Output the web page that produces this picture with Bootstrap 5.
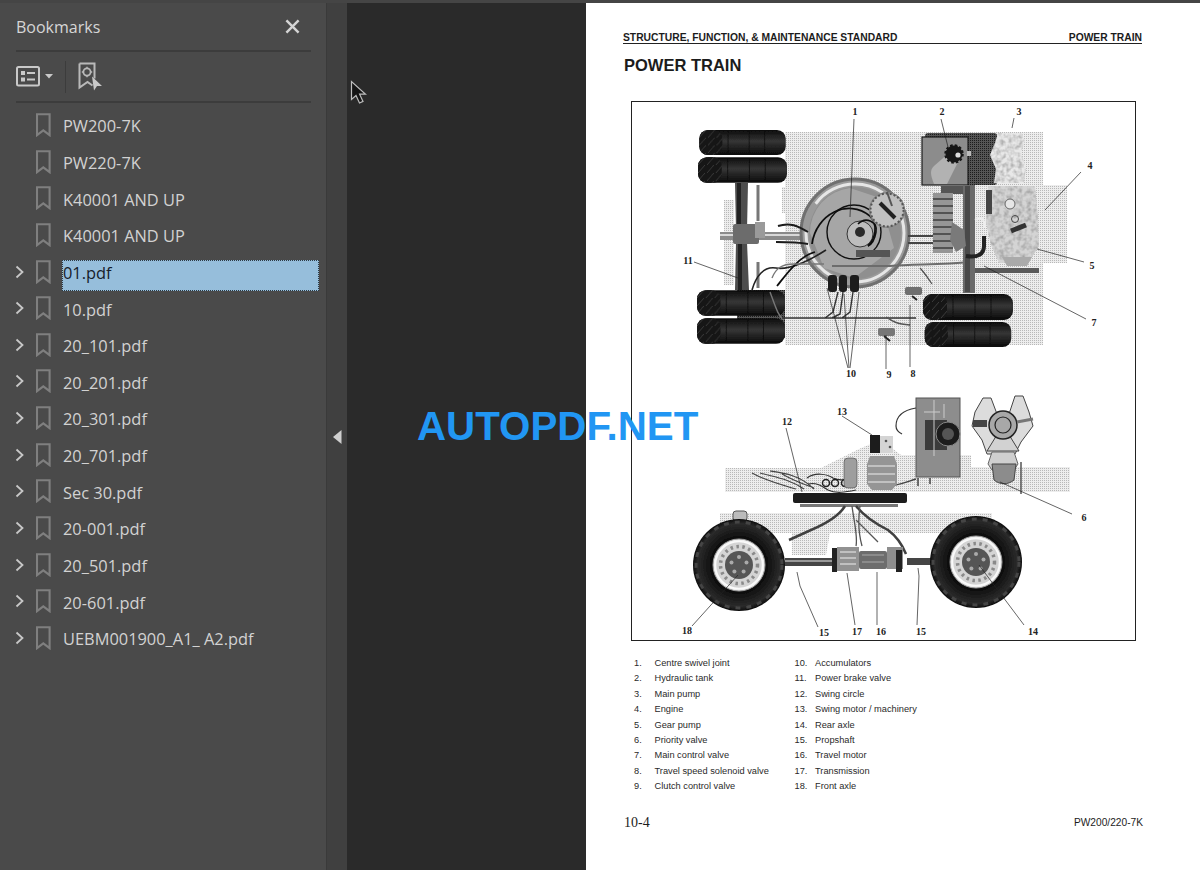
<!DOCTYPE html>
<html lang="en">
<head>
    <meta charset="UTF-8">
    <title>Bookmarks - PW200/220-7K</title>
    <link href="https://cdn.jsdelivr.net/npm/bootstrap@5.3.0/dist/css/bootstrap.min.css" rel="stylesheet">
    <style>
        html, body { height: 870px; overflow: hidden; }
        body { background: #2a2a2a; position: relative; font-family: "Liberation Sans", Arial, sans-serif; }
        .top-strip { height: 3px; background: #454545; }
        .viewer { height: 867px; }
        .side-panel { width: 326px; background: #4a4a4a; color: #d6d6d6; padding: 0 15px 0 16px; font-family: "Open Sans", "Noto Sans", sans-serif; }
        .panel-head { height: 49px; border-bottom: 2px solid #3c3c3c; }
        .panel-title { font-size: 16px; }
        .panel-close { margin-right: 11px; }
        .panel-tools { height: 51px; border-bottom: 2px solid #3c3c3c; }
        .tool-sep { width: 1px; height: 32px; background: #3c3c3c; margin: 0 12px 0 12px; }
        .mark-list { padding-top: 3.8px; margin-left: -16px; margin-right: -8px; }
        .mark-row { height: 36.64px; }
        .mark-arrow { width: 36px; padding-left: 15px; }
        .mark-flag { width: 26px; }
        .mark-label { font-size: 16.4px; padding: 0 1px; line-height: 25px; height: 31px; margin-top: 6.7px; align-self: flex-start; flex: 1; color: #d2d2d2; }
        .mark-on { background: #96bedb; color: #16212b; outline: 1px dotted #2c3a45; outline-offset: -1px; }
        .side-gutter { width: 21px; background: #404040; border-left: 1px solid #3a3a3a; }
        .doc-canvas { width: 239px; background: #2a2a2a; }
        .doc-page { width: 614px; background: #fff; padding: 28px 58px 0 37px; color: #1c1c1c; }
        .doc-head { font-size: 10.3px; font-weight: 700; height: 13px; line-height: 13px; border-bottom: 1px solid #222; }
        .doc-title { font-size: 16.5px; font-weight: 700; margin: 12px 0 0 1px; line-height: 18px; height: 18px; }
        .doc-figure { width: 505px; height: 540px; margin: 27px 0 0 8px; border: 1px solid #222; }
        .doc-figure svg { display: block; }
        .part-list { margin: 15px 0 0 11px; font-size: 9.25px; color: #2a2a2a; line-height: 15.4px; }
        .part-col { width: 160.5px; }
        .part-no { width: 20.5px; }
        .doc-foot { margin-top: 18px; height: 20px; margin-right: -1px; }
        .foot-page { font-family: "Liberation Serif", serif; font-size: 14px; margin-left: 1px; }
        .foot-code { font-size: 10.2px; }
        .stamp { position: absolute; left: 417px; top: 404px; font-size: 40.3px; line-height: 46px; color: #2196f3; font-weight: 700; font-family: "Liberation Sans", sans-serif; white-space: nowrap; }
        .pointer { position: absolute; left: 350px; top: 80px; }
        .fig-label { font-family: "Liberation Serif", serif; font-size: 10px; font-weight: 700; fill: #222; text-anchor: middle; }
    </style>
</head>
<body>
    <svg width="0" height="0" class="position-absolute">
        <symbol id="flag" viewBox="0 0 16 24"><path d="M1 1.2h12.6v21l-6.3-4.8-6.3 4.8z" fill="none" stroke="#7f7f7f" stroke-width="2.1"/></symbol>
        <symbol id="chev" viewBox="0 0 10 14"><path d="M1.5 1.5l6 5.5-6 5.5" fill="none" stroke="#c8c8c8" stroke-width="1.8"/></symbol>
    </svg>

    <div class="top-strip"></div>
    <div class="viewer d-flex">
        <div class="side-panel flex-shrink-0">
            <div class="panel-head d-flex align-items-center justify-content-between">
                <span class="panel-title">Bookmarks</span>
                <svg width="15" height="15" viewBox="0 0 16 16" class="panel-close"><path d="M1.5 1.5l13 13M14.5 1.5l-13 13" stroke="#d4d4d4" stroke-width="2.6"/></svg>
            </div>
            <div class="panel-tools d-flex align-items-center">
                <svg width="25" height="21" viewBox="0 0 25 21" class="ms-0"><rect x="1" y="1" width="22" height="18.5" rx="1.5" fill="none" stroke="#c9c9c9" stroke-width="2"/><rect x="5" y="5" width="4" height="4" fill="#c9c9c9"/><rect x="5" y="11.5" width="4" height="4" fill="#c9c9c9"/><path d="M11 7h8M11 13.5h8" stroke="#c9c9c9" stroke-width="2"/></svg>
                <svg width="8" height="5" viewBox="0 0 8 5" class="ms-1"><path d="M0 0h8L4 4.5z" fill="#c9c9c9"/></svg>
                <span class="tool-sep"></span>
                <svg width="25" height="29" viewBox="0 0 25 29"><path d="M1.5 1.5h15v15M1.5 1.5v24l8-5.5 5 3.5" fill="none" stroke="#b9b9b9" stroke-width="2"/><circle cx="9" cy="10" r="3.6" fill="none" stroke="#b9b9b9" stroke-width="1.8"/><path d="M9 4.8v1.6M9 13.6v1.6M3.8 10h1.6M12.6 10h1.6" stroke="#b9b9b9" stroke-width="1.4"/><path d="M14 14.5l10 9.5h-5l-3 4.5z" fill="#c9c9c9"/></svg>
            </div>
            <div class="mark-list d-flex flex-column">
                <div class="mark-row d-flex align-items-center"><span class="mark-arrow"></span><span class="mark-flag d-flex"><svg width="16" height="24"><use href="#flag"/></svg></span><span class="mark-label">PW200-7K</span></div>
                <div class="mark-row d-flex align-items-center"><span class="mark-arrow"></span><span class="mark-flag d-flex"><svg width="16" height="24"><use href="#flag"/></svg></span><span class="mark-label">PW220-7K</span></div>
                <div class="mark-row d-flex align-items-center"><span class="mark-arrow"></span><span class="mark-flag d-flex"><svg width="16" height="24"><use href="#flag"/></svg></span><span class="mark-label">K40001 AND UP</span></div>
                <div class="mark-row d-flex align-items-center"><span class="mark-arrow"></span><span class="mark-flag d-flex"><svg width="16" height="24"><use href="#flag"/></svg></span><span class="mark-label">K40001 AND UP</span></div>
                <div class="mark-row d-flex align-items-center"><span class="mark-arrow d-flex"><svg width="10" height="14"><use href="#chev"/></svg></span><span class="mark-flag d-flex"><svg width="16" height="24"><use href="#flag"/></svg></span><span class="mark-label mark-on">01.pdf</span></div>
                <div class="mark-row d-flex align-items-center"><span class="mark-arrow d-flex"><svg width="10" height="14"><use href="#chev"/></svg></span><span class="mark-flag d-flex"><svg width="16" height="24"><use href="#flag"/></svg></span><span class="mark-label">10.pdf</span></div>
                <div class="mark-row d-flex align-items-center"><span class="mark-arrow d-flex"><svg width="10" height="14"><use href="#chev"/></svg></span><span class="mark-flag d-flex"><svg width="16" height="24"><use href="#flag"/></svg></span><span class="mark-label">20_101.pdf</span></div>
                <div class="mark-row d-flex align-items-center"><span class="mark-arrow d-flex"><svg width="10" height="14"><use href="#chev"/></svg></span><span class="mark-flag d-flex"><svg width="16" height="24"><use href="#flag"/></svg></span><span class="mark-label">20_201.pdf</span></div>
                <div class="mark-row d-flex align-items-center"><span class="mark-arrow d-flex"><svg width="10" height="14"><use href="#chev"/></svg></span><span class="mark-flag d-flex"><svg width="16" height="24"><use href="#flag"/></svg></span><span class="mark-label">20_301.pdf</span></div>
                <div class="mark-row d-flex align-items-center"><span class="mark-arrow d-flex"><svg width="10" height="14"><use href="#chev"/></svg></span><span class="mark-flag d-flex"><svg width="16" height="24"><use href="#flag"/></svg></span><span class="mark-label">20_701.pdf</span></div>
                <div class="mark-row d-flex align-items-center"><span class="mark-arrow d-flex"><svg width="10" height="14"><use href="#chev"/></svg></span><span class="mark-flag d-flex"><svg width="16" height="24"><use href="#flag"/></svg></span><span class="mark-label">Sec 30.pdf</span></div>
                <div class="mark-row d-flex align-items-center"><span class="mark-arrow d-flex"><svg width="10" height="14"><use href="#chev"/></svg></span><span class="mark-flag d-flex"><svg width="16" height="24"><use href="#flag"/></svg></span><span class="mark-label">20-001.pdf</span></div>
                <div class="mark-row d-flex align-items-center"><span class="mark-arrow d-flex"><svg width="10" height="14"><use href="#chev"/></svg></span><span class="mark-flag d-flex"><svg width="16" height="24"><use href="#flag"/></svg></span><span class="mark-label">20_501.pdf</span></div>
                <div class="mark-row d-flex align-items-center"><span class="mark-arrow d-flex"><svg width="10" height="14"><use href="#chev"/></svg></span><span class="mark-flag d-flex"><svg width="16" height="24"><use href="#flag"/></svg></span><span class="mark-label">20-601.pdf</span></div>
                <div class="mark-row d-flex align-items-center"><span class="mark-arrow d-flex"><svg width="10" height="14"><use href="#chev"/></svg></span><span class="mark-flag d-flex"><svg width="16" height="24"><use href="#flag"/></svg></span><span class="mark-label">UEBM001900_A1_ A2.pdf</span></div>
            </div>
        </div>
        <div class="side-gutter flex-shrink-0 d-flex align-items-center justify-content-center">
            <svg width="9" height="14" viewBox="0 0 9 14"><path d="M8.5 0v14L0 7z" fill="#cfcfcf"/></svg>
        </div>
        <div class="doc-canvas flex-shrink-0"></div>
        <div class="doc-page flex-shrink-0">
            <div class="doc-head d-flex justify-content-between"><span>STRUCTURE, FUNCTION, &amp; MAINTENANCE STANDARD</span><span>POWER TRAIN</span></div>
            <div class="doc-title">POWER TRAIN</div>
            <div class="doc-figure">
                <svg width="503" height="538" viewBox="632 102 503 538" xmlns="http://www.w3.org/2000/svg">
                    <defs>
                        <pattern id="dots" width="2" height="2" patternUnits="userSpaceOnUse"><rect width="2" height="2" fill="#ededed"/><rect width="1" height="1" fill="#b8b8b8"/></pattern>
                        <pattern id="dotsDark" width="2" height="2" patternUnits="userSpaceOnUse"><rect width="2" height="2" fill="#555"/><rect width="1" height="1" fill="#1c1c1c"/></pattern>
                        <pattern id="tread" width="9" height="8" patternUnits="userSpaceOnUse"><rect width="9" height="8" fill="#141414"/><path d="M0 8L7 0" stroke="#3d3d3d" stroke-width="1"/></pattern>
                        <linearGradient id="tireShade" x1="0" y1="0" x2="0" y2="1"><stop offset="0" stop-color="#0c0c0c"/><stop offset=".45" stop-color="#363636"/><stop offset="1" stop-color="#090909"/></linearGradient>
                        <radialGradient id="tireRound"><stop offset=".6" stop-color="#0e0e0e"/><stop offset=".9" stop-color="#2b2b2b"/><stop offset="1" stop-color="#0c0c0c"/></radialGradient>
                        <symbol id="tireTop" viewBox="0 0 90 26" overflow="visible">
                            <rect width="90" height="26" rx="9" fill="url(#tireShade)"/>
                            <rect width="24" height="26" rx="9" fill="url(#tread)"/>
                            <path d="M30 1v24M52 1v24M68 1v24" stroke="#0a0a0a" stroke-width=".7"/>
                        </symbol>
                        <symbol id="wheel" viewBox="-47 -47 94 94" overflow="visible">
                            <circle r="46" fill="url(#tireRound)"/>
                            <circle r="43" fill="none" stroke="#444" stroke-width="3" stroke-dasharray="5 6"/>
                            <circle r="28" fill="#111"/>
                            <circle r="26" fill="#f0f0f0" stroke="#999"/>
                            <circle r="23.5" fill="#d4d4d4" stroke="#fafafa" stroke-width="1.5"/>
                            <circle r="18.5" fill="none" stroke="#8a8a8a" stroke-width="3.5" stroke-dasharray="2.5 3.5"/>
                            <circle r="14" fill="#555"/>
                            <circle cx="0" cy="-8" r="2" fill="#aaa"/><circle cx="7.5" cy="-2.5" r="2" fill="#aaa"/><circle cx="4.6" cy="6.5" r="2" fill="#aaa"/><circle cx="-4.6" cy="6.5" r="2" fill="#aaa"/><circle cx="-7.5" cy="-2.5" r="2" fill="#aaa"/>
                        </symbol>
                        <filter id="soft"><feGaussianBlur stdDeviation=".45"/></filter>
                        <filter id="mottle" x="0" y="0" width="100%" height="100%">
                            <feTurbulence type="fractalNoise" baseFrequency=".22" numOctaves="2" seed="4"/>
                            <feColorMatrix values="0 0 0 0 .3  0 0 0 0 .3  0 0 0 0 .3  1.7 0 0 0 -.62"/>
                            <feComposite in2="SourceGraphic" operator="in"/>
                            <feMerge><feMergeNode in="SourceGraphic"/><feMergeNode/></feMerge>
                        </filter>
                    </defs>

                    <g filter="url(#soft)">
                        <!-- plan view -->
                        <rect x="785" y="132" width="258" height="213" fill="url(#dots)"/>
                        <rect x="1043" y="185" width="24" height="78" fill="url(#dots)"/>
                        <rect x="782" y="187" width="40" height="26" fill="url(#dots)"/>
                        <rect x="724" y="200" width="10" height="85" fill="url(#dots)"/>
                        <rect x="737" y="290" width="48" height="48" fill="url(#dotsDark)"/>

                        <use href="#tireTop" x="698" y="130" width="89" height="25"/>
                        <use href="#tireTop" x="698" y="157" width="89" height="26"/>
                        <use href="#tireTop" x="697" y="290" width="88" height="26"/>
                        <use href="#tireTop" x="697" y="318" width="88" height="26"/>
                        <use href="#tireTop" x="923" y="294" width="90" height="26"/>
                        <use href="#tireTop" x="923" y="322" width="90" height="25"/>

                        <!-- left axle -->
                        <path d="M735 183h13l-1 47h-11zM736 242h11l2 48h-14z" fill="#4e4e4e"/>
                        <path d="M737 183h4v47h-4zM738 244h4v46h-4z" fill="#222"/>
                        <rect x="720" y="232" width="80" height="8" fill="#8a8a8a"/>
                        <rect x="720" y="234" width="80" height="2" fill="#d8d8d8"/>
                        <rect x="733" y="224" width="26" height="20" rx="2" fill="#6c6c6c"/>
                        <rect x="755" y="222" width="10" height="16" fill="#9a9a9a"/>
                        <path d="M758 185v36M758 262v26" stroke="#777" stroke-width="3"/>

                        <!-- swing circle -->
                        <circle cx="855" cy="233" r="54" fill="#9a9a9a" stroke="#6f6f6f" stroke-width="3"/>
                        <circle cx="855" cy="233" r="49" fill="none" stroke="#e6e6e6" stroke-width="3" stroke-dasharray="75 20 60 30"/>
                        <circle cx="855" cy="233" r="46" fill="#8f8f8f"/>
                        <path d="M810 233a45 45 0 0 1 40-45l30 10 14 50-40 30-30-10z" fill="#a6a6a6"/>
                        <circle cx="860" cy="234" r="13" fill="#bdbdbd" stroke="#333"/>
                        <circle cx="860" cy="232" r="5" fill="#2a2a2a"/>
                        <circle cx="854" cy="232" r="27" fill="none" stroke="#111" stroke-width="1.4"/>
                        <path d="M812 244c4-30 36-46 58-28 8 8 6 22-2 30" fill="none" stroke="#111" stroke-width="1.8"/>
                        <path d="M858 224c8-8 20-2 18 8-1 6-4 12-8 14" fill="none" stroke="#111" stroke-width="1.6"/>
                        <circle cx="887" cy="210" r="18" fill="#8a8a8a"/>
                        <circle cx="887" cy="210" r="16.5" fill="#c0c0c0" stroke="#555" stroke-width="2" stroke-dasharray="2 2"/>
                        <path d="M880 203l15 15" stroke="#222" stroke-width="4"/>
                        <path d="M887 192l5 14" stroke="#555" stroke-width="2"/>
                        <rect x="856" y="250" width="34" height="7" fill="#555"/>
                        <path d="M778 226c12-4 20 0 30 6M776 242c12 0 22 0 32 2" fill="none" stroke="#1a1a1a" stroke-width="2"/>
                        <path d="M908 236h25M908 243h25" stroke="#444" stroke-width="2"/>

                        <!-- accumulators -->
                        <rect x="828" y="275" width="9" height="17" rx="3" fill="#1d1d1d"/>
                        <rect x="839" y="275" width="8" height="17" rx="3" fill="#1d1d1d"/>
                        <rect x="850" y="275" width="9" height="17" rx="3" fill="#1d1d1d"/>

                        <!-- hose runs -->
                        <path d="M752 290c4-14 12-24 24-22s28-4 50-18" fill="none" stroke="#222" stroke-width="1.6"/>
                        <path d="M777 286c8-10 22-30 38-34" fill="none" stroke="#111" stroke-width="1.8"/>
                        <path d="M772 278c4-10 10-14 22-14h30M770 292c6 16 8 24 14 28" fill="none" stroke="#777" stroke-width="1.4"/>
                        <path d="M782 318h134M838 292l-5 20-8 6M843 292l-3 22-8 4M853 292l-3 20-8 6" fill="none" stroke="#333" stroke-width="1.4"/>
                        <path d="M886 317c6 4 10 7 24 8" fill="none" stroke="#555" stroke-width="1.4"/>
                        <path d="M832 266h58c24-2 50-1 80-4" fill="none" stroke="#6c6c6c" stroke-width="2"/>
                        <path d="M920 268c4 4 8 10 12 16" stroke="#555" stroke-width="1.2"/>
                        <rect x="975" y="268" width="64" height="5" fill="#5a5a5a"/>
                        <rect x="905" y="287" width="17" height="8" rx="2" fill="#6e6e6e"/>
                        <rect x="878" y="328" width="17" height="8" rx="2" fill="#777"/>
                        <path d="M912 296l5 4M884 336l6 5" stroke="#222" stroke-width="2"/>

                        <!-- hydraulic tank -->
                        <rect x="925" y="133" width="72" height="52" rx="3" fill="url(#dotsDark)"/>
                        <rect x="922" y="137" width="46" height="48" fill="#8c8c8c" stroke="#1c1c1c" stroke-width="1.2"/>
                        <path d="M934 184c-4-10-4-14 0-18l16-14 9 8-12 24z" fill="#b2b2b2"/>
                        <circle cx="954" cy="154" r="8.5" fill="#141414" stroke="#141414" stroke-width="2.5" stroke-dasharray="2.5 2"/>
                        <circle cx="958" cy="155" r="2.6" fill="#dcdcdc"/>
                        <rect x="967" y="151" width="4" height="5" fill="#bbb"/>

                        <!-- control valve and right axle -->
                        <rect x="963" y="185" width="12" height="108" fill="#6b6b6b"/>
                        <rect x="965" y="186" width="5" height="106" fill="#4a4a4a"/>
                        <rect x="941" y="186" width="22" height="8" fill="#555"/>
                        <rect x="933" y="193" width="20" height="60" fill="#969696"/>
                        <path d="M933 199h20M933 206h20M933 213h20M933 220h20M933 227h20M933 234h20M933 241h20M933 248h20" stroke="#3c3c3c" stroke-width="1.6"/>
                        <path d="M952 222l12 8 2 16-10 6-6-12z" fill="#7a7a7a"/>
                        <path d="M966 256c12 2 18-2 18-10v-10" fill="none" stroke="#222" stroke-width="4"/>
                        <path d="M975 220c8-4 10 0 9 8" fill="none" stroke="#eee" stroke-width="2"/>

                        <!-- engine -->
                        <path d="M998 133h24l3 8-4 12 5 14-2 16h-30l2-14-6-14 5-12z" fill="#e8e8e8" filter="url(#mottle)"/>
                        <path d="M988 186h47l3 30 1 30-10 16-30 1-8-18-5-22z" fill="#d4d4d4" filter="url(#mottle)"/>
                        <rect x="986" y="190" width="6" height="24" fill="#444"/>
                        <circle cx="1015" cy="219" r="3.5" fill="none" stroke="#444"/><circle cx="1010" cy="204" r="5" fill="#e6e6e6" stroke="#666"/>
                        <path d="M1011 231l15-6" stroke="#333" stroke-width="5"/>
                        <path d="M1002 257h30l-5 9h-20z" fill="#aaa"/>

                        <!-- side view -->
                        <path d="M725 468h96l18-9 20-10 14-6h12l16 12h70v12h99v25H725z" fill="url(#dots)"/>
                        <path d="M720 513h272v20H830l-4 22h-34v-22h-72z" fill="url(#dots)"/>
                        <path d="M752 473c14 8 30 12 44 16M760 473c14 4 30 6 44 16M770 471c14 2 30 4 44 18M782 474c14 8 22 10 32 14" fill="none" stroke="#444" stroke-width="1.1"/>
                        <path d="M807 478c8-6 20-4 26 0 6 3 12 2 22 0M808 484c8-2 14 2 20 6 8 4 18 2 28 0" fill="none" stroke="#333" stroke-width="1.2"/>
                        <circle cx="826" cy="483" r="3.5" fill="none" stroke="#222" stroke-width="1.5"/>
                        <circle cx="835" cy="483" r="3.5" fill="none" stroke="#222" stroke-width="1.5"/>
                        <circle cx="845" cy="483" r="3.5" fill="none" stroke="#222" stroke-width="1.5"/>
                        <rect x="793" y="493" width="114" height="10" rx="2" fill="#1b1b1b"/>
                        <rect x="800" y="504" width="98" height="3" fill="#777"/>
                        <path d="M876 488c20-1 30-6 40-9M918 478v8M930 478v6" fill="none" stroke="#444" stroke-width="1.5"/>
                        <rect x="844" y="458" width="13" height="30" rx="4" fill="#9e9e9e" stroke="#444" stroke-width=".6"/>
                        <path d="M870 456h24l3 8v20l-5 6h-20l-5-6v-20z" fill="#959595"/>
                        <path d="M868 466h27M868 474h27M868 482h27" stroke="#cfcfcf" stroke-width="1.6"/>
                        <rect x="870" y="435" width="10" height="18" fill="#1a1a1a"/>
                        <rect x="880" y="436" width="13" height="17" fill="#d4d4d4"/>
                        <circle cx="886" cy="441" r="1.3" fill="#555"/><circle cx="890" cy="447" r="1.3" fill="#555"/>
                        <rect x="916" y="398" width="44" height="79" fill="#8d8d8d" stroke="#555"/>
                        <rect x="925" y="420" width="22" height="30" fill="#3a3a3a"/>
                        <circle cx="948" cy="434" r="12" fill="#1d1d1d" stroke="#888"/>
                        <circle cx="948" cy="434" r="6" fill="#555"/>
                        <path d="M934 400v56M924 412h16M944 404v14" stroke="#ccc" stroke-width="1"/>
                        <path d="M916 408c-12 2-20 8-20 18 0 4 2 6 6 8" fill="none" stroke="#333" stroke-width="1.2"/>
                        <path d="M975 412l8-14 8 0 6 16 12 0 6-18 8 0 6 16 4 14-12 16-6 12h-28l-5-14-10-14z" fill="#dcdcdc" stroke="#444"/>
                        <rect x="973" y="420" width="14" height="7" fill="#444"/>
                        <path d="M1003 425l-16 26h32z" fill="#d2d2d2" stroke="#444"/>
                        <circle cx="1003" cy="425" r="14" fill="#a8a8a8" stroke="#222" stroke-width="1.5"/>
                        <circle cx="1003" cy="425" r="8" fill="none" stroke="#222" stroke-width="1.2"/>
                        <path d="M1017 422l16-3" stroke="#777" stroke-width="3"/>
                        <path d="M992 452h22l4 12-4 6h-22l-4-6z" fill="#cfcfcf" stroke="#666"/>
                        <path d="M992 464h24l-2 16c-6 5-14 5-20 0z" fill="#8c8c8c" stroke="#444"/>
                        <path d="M1021 462v32" stroke="#555" stroke-width="1.5"/>

                        <!-- drive line -->
                        <path d="M845 506c-6 10-20 18-34 24l-22 10M856 506c8 10 20 18 32 24 8 6 14 14 18 24" fill="none" stroke="#3f3f3f" stroke-width="2.5"/>
                        <path d="M852 506c2 16 6 30 4 40M860 506c-2 14-2 26 2 40M856 520l22 22" fill="none" stroke="#555" stroke-width="1.3"/>
                        <rect x="785" y="558" width="48" height="8" fill="#444"/>
                        <rect x="785" y="560" width="48" height="2" fill="#999"/>
                        <rect x="907" y="558" width="24" height="7" fill="#444"/>
                        <rect x="832" y="548" width="5" height="24" fill="#222"/>
                        <rect x="837" y="547" width="22" height="24" fill="#929292"/>
                        <path d="M840 552h16M840 558h16M840 564h16" stroke="#cfcfcf" stroke-width="1.6"/>
                        <rect x="859" y="551" width="28" height="18" rx="2" fill="#6d6d6d"/>
                        <path d="M862 555h22M862 562h22" stroke="#aaa" stroke-width="1.2"/>
                        <rect x="887" y="547" width="16" height="22" fill="#8e8e8e"/>
                        <rect x="896" y="550" width="6" height="22" fill="#222"/>

                        <rect x="733" y="511" width="14" height="10" rx="3" fill="#bbb" stroke="#555"/>
                        <use href="#wheel" x="692" y="518" width="94" height="94"/>
                        <use href="#wheel" x="929" y="515" width="94" height="94"/>
                    </g>

                    <!-- leader lines -->
                    <g stroke="#222" stroke-width=".7" fill="none">
                        <path d="M854 119l-4 98"/>
                        <path d="M941 119l7 28"/>
                        <path d="M1014 118l-2 10"/>
                        <path d="M1081 172l-36 38"/>
                        <path d="M1084 262l-47-13"/>
                        <path d="M1086 319l-102-53"/>
                        <path d="M910 367v-62"/>
                        <path d="M886 369v-34"/>
                        <path d="M848 368l-21-80M849 368l-5-74M850 368l9-76"/>
                        <path d="M694 262l44 16"/>
                        <path d="M842 416l30 19"/>
                        <path d="M786 428l16 64"/>
                        <path d="M1072 514l-72-32"/>
                        <path d="M692 626l46-51"/>
                        <path d="M818 627l-18-41-3-14"/>
                        <path d="M855 625l-8-52"/>
                        <path d="M877 625v-53"/>
                        <path d="M917 625l2-49-1-8"/>
                        <path d="M1024 625l-45-60"/>
                    </g>

                    <text class="fig-label" x="855" y="115">1</text>
                    <text class="fig-label" x="942" y="115">2</text>
                    <text class="fig-label" x="1019" y="115">3</text>
                    <text class="fig-label" x="1090" y="169">4</text>
                    <text class="fig-label" x="1092" y="269">5</text>
                    <text class="fig-label" x="1084" y="521">6</text>
                    <text class="fig-label" x="1094" y="326">7</text>
                    <text class="fig-label" x="913" y="377">8</text>
                    <text class="fig-label" x="889" y="378">9</text>
                    <text class="fig-label" x="851" y="377">10</text>
                    <text class="fig-label" x="688" y="264">11</text>
                    <text class="fig-label" x="787" y="425">12</text>
                    <text class="fig-label" x="842" y="415">13</text>
                    <text class="fig-label" x="1033" y="635">14</text>
                    <text class="fig-label" x="824" y="636">15</text>
                    <text class="fig-label" x="857" y="635">17</text>
                    <text class="fig-label" x="881" y="635">16</text>
                    <text class="fig-label" x="921" y="635">15</text>
                    <text class="fig-label" x="687" y="634">18</text>
                </svg>
            </div>
            <div class="part-list d-flex">
                <div class="part-col">
                    <div class="d-flex"><span class="part-no">1.</span><span>Centre swivel joint</span></div>
                    <div class="d-flex"><span class="part-no">2.</span><span>Hydraulic tank</span></div>
                    <div class="d-flex"><span class="part-no">3.</span><span>Main pump</span></div>
                    <div class="d-flex"><span class="part-no">4.</span><span>Engine</span></div>
                    <div class="d-flex"><span class="part-no">5.</span><span>Gear pump</span></div>
                    <div class="d-flex"><span class="part-no">6.</span><span>Priority valve</span></div>
                    <div class="d-flex"><span class="part-no">7.</span><span>Main control valve</span></div>
                    <div class="d-flex"><span class="part-no">8.</span><span>Travel speed solenoid valve</span></div>
                    <div class="d-flex"><span class="part-no">9.</span><span>Clutch control valve</span></div>
                </div>
                <div class="part-col">
                    <div class="d-flex"><span class="part-no">10.</span><span>Accumulators</span></div>
                    <div class="d-flex"><span class="part-no">11.</span><span>Power brake valve</span></div>
                    <div class="d-flex"><span class="part-no">12.</span><span>Swing circle</span></div>
                    <div class="d-flex"><span class="part-no">13.</span><span>Swing motor / machinery</span></div>
                    <div class="d-flex"><span class="part-no">14.</span><span>Rear axle</span></div>
                    <div class="d-flex"><span class="part-no">15.</span><span>Propshaft</span></div>
                    <div class="d-flex"><span class="part-no">16.</span><span>Travel motor</span></div>
                    <div class="d-flex"><span class="part-no">17.</span><span>Transmission</span></div>
                    <div class="d-flex"><span class="part-no">18.</span><span>Front axle</span></div>
                </div>
            </div>
            <div class="doc-foot d-flex justify-content-between align-items-center">
                <span class="foot-page">10-4</span>
                <span class="foot-code">PW200/220-7K</span>
            </div>
        </div>
    </div>

    <div class="stamp">AUTOPDF.NET</div>
    <svg class="pointer" width="17" height="25" viewBox="0 0 17 25"><path d="M1.5 1.5v18l4.5-4 3.5 7.5 3.5-1.6-3.4-7.2h6z" fill="#141414" stroke="#bdbdbd" stroke-width="1.2"/></svg>

    <script src="https://cdn.jsdelivr.net/npm/bootstrap@5.3.0/dist/js/bootstrap.bundle.min.js"></script>
</body>
</html>
